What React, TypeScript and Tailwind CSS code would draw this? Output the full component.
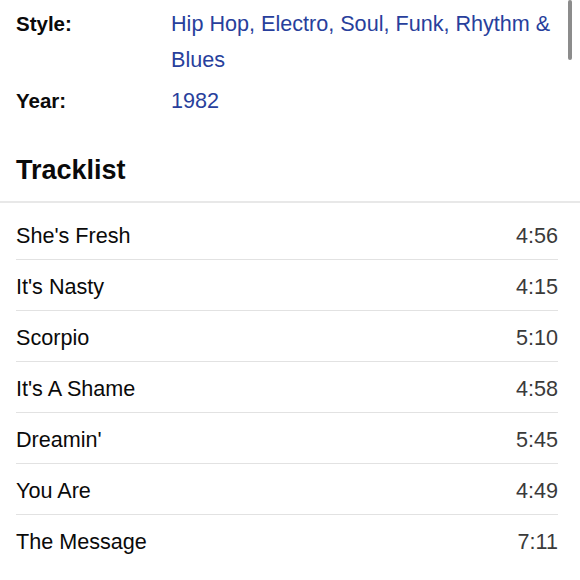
import React from "react";

const tracks: [string, string][] = [
  ["She's Fresh", "4:56"],
  ["It's Nasty", "4:15"],
  ["Scorpio", "5:10"],
  ["It's A Shame", "4:58"],
  ["Dreamin'", "5:45"],
  ["You Are", "4:49"],
  ["The Message", "7:11"],
];

export default function App() {
  return (
    <div
      className="relative w-[580px] h-[580px] overflow-hidden bg-white text-[#0a0a0a]"
      style={{ fontFamily: '"Liberation Sans", Arial, sans-serif' }}
    >
      <div className="absolute right-[8px] top-0 w-[4px] h-[60px] rounded-full bg-[#8c8c8c]" />
      <div className="flex flex-col gap-[5px] pt-[6px] pl-4 pr-[22px]">
        <div className="grid grid-cols-[155px_1fr]">
          <div className="text-[20.5px] font-bold leading-[36px]">Style:</div>
          <div className="text-[21.6px] leading-[36px] text-[#283f9c]">
            Hip Hop, Electro, Soul, Funk, Rhythm &amp; Blues
          </div>
        </div>
        <div className="grid grid-cols-[155px_1fr]">
          <div className="text-[20.5px] font-bold leading-[36px]">Year:</div>
          <div className="text-[21.6px] leading-[36px] text-[#283f9c]">1982</div>
        </div>
      </div>
      <div className="mt-[35px] border-b-2 border-[#e8e8e8] pb-[15px] pl-4">
        <div className="text-[27px] font-bold leading-[32px]">Tracklist</div>
      </div>
      <div className="mt-[6px] ml-4 mr-[22px] flex flex-col">
        {tracks.map(([t, d], i) => (
          <div
            key={t}
            className={
              i < tracks.length - 1
                ? "flex h-[51px] items-center justify-between border-b border-[#e2e2e2] pt-[4px] text-[21.6px]"
                : "flex h-[51px] items-center justify-between pt-[4px] text-[21.6px]"
            }
          >
            <span>{t}</span>
            <span className="text-[#3a3a3a]">{d}</span>
          </div>
        ))}
      </div>
    </div>
  );
}
